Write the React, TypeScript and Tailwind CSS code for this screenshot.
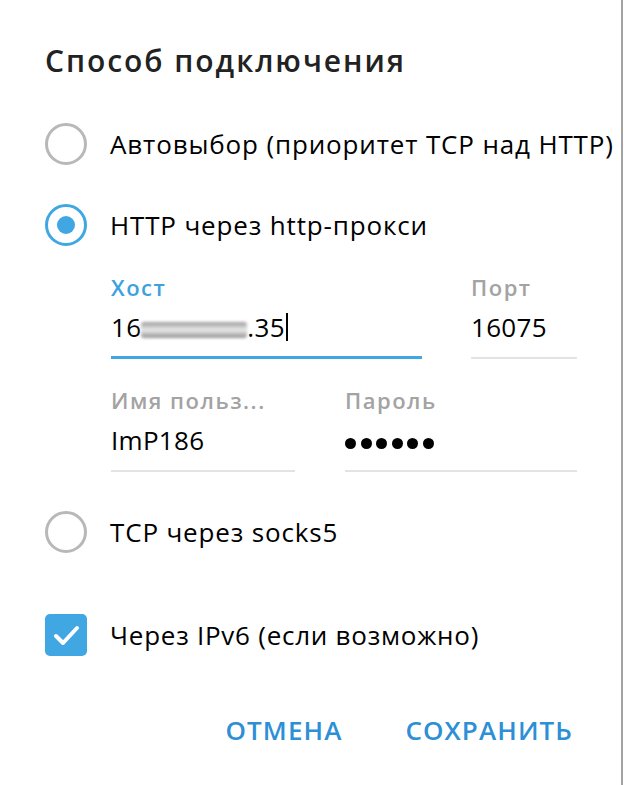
import React from 'react';

function Radio({ checked }: { checked?: boolean }) {
  return (
    <div
      className={`w-[42px] h-[42px] shrink-0 rounded-full border-[3px] flex items-center justify-center ${
        checked ? 'border-[#40a7e3]' : 'border-[#b8b8b8]'
      }`}
    >
      {checked && <div className="w-[18px] h-[18px] rounded-full bg-[#40a7e3]" />}
    </div>
  );
}

function Option({ checked, label }: { checked?: boolean; label: string }) {
  return (
    <div className="flex items-center h-[42px] gap-[23px]">
      <Radio checked={checked} />
      <span className="text-[26px] leading-[36px] tracking-[0.85px] text-black whitespace-nowrap">{label}</span>
    </div>
  );
}

function Field({
  label,
  width,
  focused,
  children,
}: {
  label: string;
  width: string;
  focused?: boolean;
  children: React.ReactNode;
}) {
  return (
    <div className={`flex flex-col ${width}`}>
      <div
        className={`h-[28px] text-[22px] leading-[28px] tracking-[1.5px] font-semibold whitespace-nowrap ${
          focused ? 'text-[#3ba2df]' : 'text-[#a3a3a3]'
        }`}
      >
        {label}
      </div>
      <div className="mt-[8px] h-[36px] text-[26px] leading-[36px] tracking-[0.3px] text-black flex items-center whitespace-nowrap">
        {children}
      </div>
      <div className="mt-[11px] h-[3px] flex items-end">
        {focused ? (
          <div className="w-full h-[3px] bg-[#40a7e3]" />
        ) : (
          <div className="w-full h-[2px] bg-[#e3e3e3]" />
        )}
      </div>
    </div>
  );
}

export default function App() {
  return (
    <div className="w-[624px] h-[785px] bg-white" style={{ fontFamily: '"Open Sans", "Noto Sans", sans-serif' }}>
      <div className="w-[623px] h-full border-r-2 border-[#a3a3a3] pl-[45px] pt-[42px] flex flex-col">
        {/* Title */}
        <div className="h-[37px] text-[30px] leading-[37px] tracking-[1.95px] font-semibold text-[#222] whitespace-nowrap">
          Способ подключения
        </div>

        <div className="mt-[44px]">
          <Option label="Автовыбор (приоритет TCP над HTTP)" />
        </div>
        <div className="mt-[39px]">
          <Option checked label="HTTP через http-прокси" />
        </div>

        {/* Proxy fields */}
        <div className="ml-[66px] mt-[27px] flex gap-[49px]">
          <Field label="Хост" width="w-[311px]" focused>
            <span>16</span>
            <span className="inline-block w-[106px] h-[16px] mt-[6px] rounded-[3px] bg-gradient-to-b from-[#9a9a9a] via-[#ececec] to-[#8f8f8f] blur-[1.5px]" />
            <span>.35</span>
            <span className="inline-block w-[2px] h-[28px] bg-black ml-[1px]" />
          </Field>
          <Field label="Порт" width="w-[106px]">
            16075
          </Field>
        </div>
        <div className="ml-[66px] mt-[27px] flex gap-[50px]">
          <Field label="Имя польз..." width="w-[184px]">
            ImP186
          </Field>
          <Field label="Пароль" width="w-[232px]">
            <div className="flex gap-[4.5px] mt-[6px]">
              {[0, 1, 2, 3, 4, 5].map((i) => (
                <span key={i} className="w-[11px] h-[11px] rounded-full bg-black" />
              ))}
            </div>
          </Field>
        </div>

        <div className="mt-[39px]">
          <Option label="TCP через socks5" />
        </div>

        {/* IPv6 checkbox */}
        <div className="mt-[61px] flex items-center h-[42px] gap-[23px]">
          <div className="w-[42px] h-[42px] rounded-[5px] bg-[#40a7e3] flex items-center justify-center">
            <svg width="42" height="42" viewBox="0 0 42 42" fill="none">
              <path d="M11 22 L18 29 L32 14" stroke="white" strokeWidth="4" strokeLinecap="round" strokeLinejoin="round" />
            </svg>
          </div>
          <span className="text-[26px] leading-[36px] tracking-[0.75px] text-black whitespace-nowrap">Через IPv6 (если возможно)</span>
        </div>

        {/* Buttons */}
        <div className="mt-[56px] flex justify-end gap-[63px] pr-[48px]">
          <button className="text-[26px] leading-[36px] tracking-[1.1px] font-semibold text-[#2d8fd5]">ОТМЕНА</button>
          <button className="text-[26px] leading-[36px] tracking-[1.1px] font-semibold text-[#2d8fd5]">СОХРАНИТЬ</button>
        </div>
      </div>
    </div>
  );
}
